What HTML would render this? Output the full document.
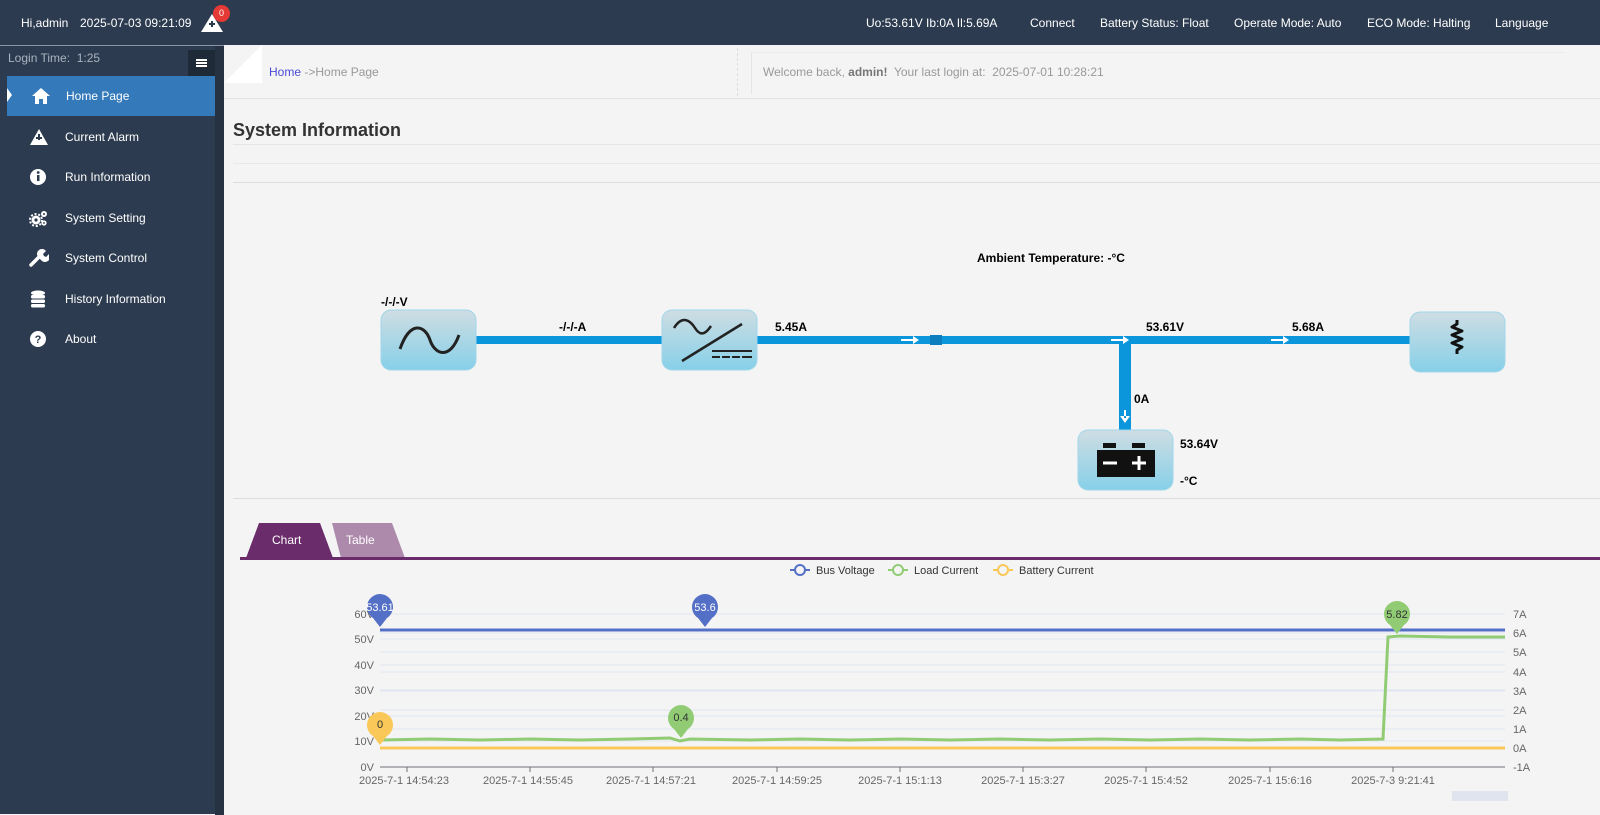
<!DOCTYPE html>
<html><head><meta charset="utf-8"><style>
*{margin:0;padding:0;box-sizing:border-box}
body{width:1600px;height:814px;overflow:hidden;background:#f4f4f4;font-family:"Liberation Sans",Arial,sans-serif;position:relative}
.top{position:absolute;left:0;top:0;width:1600px;height:45px;background:#2c3b4f;color:#fff;font-size:12px}
.top span{position:absolute;top:16px}
.side{position:absolute;left:0;top:45px;width:224px;height:769px;background:#2c3b4f;border-top:1px solid #8a96a6}
.side .strip{position:absolute;left:215px;top:0;width:9px;height:769px;background:#263242}
.menu{position:absolute;left:0;width:215px;height:40px;color:#fff;font-size:12px}
.menu .t{position:absolute;left:65px;top:13px}
.menu svg{position:absolute;left:29px;top:11px}
</style></head><body>
<div class="top">
<span style="left:21px">Hi,admin</span>
<span style="left:80px">2025-07-03 09:21:09</span>
<svg style="position:absolute;left:200px;top:13px" width="24" height="20" viewBox="0 0 24 20"><path d="M12 1 L23 19 H1 Z" fill="#fff"/><path d="M12 8v6M9 11h6" stroke="#2c3b4f" stroke-width="2"/></svg>
<div style="position:absolute;left:213px;top:5px;width:17px;height:17px;border-radius:50%;background:#e53935;font-size:9px;text-align:center;line-height:17px">0</div>
<span style="left:866px">Uo:53.61V Ib:0A Il:5.69A</span>
<span style="left:1030px">Connect</span>
<span style="left:1100px">Battery Status: Float</span>
<span style="left:1234px">Operate Mode: Auto</span>
<span style="left:1367px">ECO Mode: Halting</span>
<span style="left:1495px">Language</span>
</div>
<div class="side">
<div class="strip"></div>
<div style="position:absolute;left:8px;top:5px;color:#aab4c0;font-size:12px">Login Time:&nbsp; 1:25</div>
<div style="position:absolute;left:188px;top:4px;width:27px;height:27px;background:#1f2a38"><div style="position:absolute;left:8px;top:9px;width:11px;height:2px;background:#fff;box-shadow:0 3px #fff,0 6px #fff"></div></div>
<div class="menu" style="top:30px;left:7px;width:208px;background:#3479b9"><svg width="20" height="18" viewBox="0 0 20 18" style="left:24px"><path d="M10 1 L19 9 H16 V17 H12 V12 H8 V17 H4 V9 H1 Z" fill="#fff"/></svg><span class="t" style="left:59px">Home Page</span><div style="position:absolute;left:0;top:12px;border-left:5px solid #fff;border-top:7px solid transparent;border-bottom:7px solid transparent"></div></div>
<div class="menu" style="top:71px"><svg width="20" height="18" viewBox="0 0 20 18"><path d="M10 1 L19 17 H1 Z" fill="#fff"/><path d="M10 6v6M7 10h6" stroke="#2c3b4f" stroke-width="2"/></svg><span class="t">Current Alarm</span></div>
<div class="menu" style="top:111px"><svg width="20" height="18" viewBox="0 0 20 18"><circle cx="9" cy="9" r="8" fill="#fff"/><rect x="8" y="7" width="2.5" height="6" fill="#2c3b4f"/><circle cx="9.2" cy="4.5" r="1.4" fill="#2c3b4f"/></svg><span class="t">Run Information</span></div>
<div class="menu" style="top:152px"><svg width="20" height="18" viewBox="0 0 20 18"><circle cx="7" cy="11" r="4.5" fill="#fff"/><circle cx="7" cy="11" r="6" fill="none" stroke="#fff" stroke-width="2" stroke-dasharray="2 1.8"/><circle cx="7" cy="11" r="1.6" fill="#2c3b4f"/><circle cx="15" cy="5" r="3" fill="#fff"/><circle cx="15" cy="5" r="1" fill="#2c3b4f"/><circle cx="15" cy="14" r="2.6" fill="#fff"/><circle cx="15" cy="14" r="0.9" fill="#2c3b4f"/></svg><span class="t">System Setting</span></div>
<div class="menu" style="top:192px"><svg width="20" height="18" viewBox="0 0 20 18"><path d="M2 16 L10 8" stroke="#fff" stroke-width="3.5" stroke-linecap="round"/><path d="M9 8 a5 5 0 0 1 8 -6 l-3 3 l1 2 l2 1 l3-3 a5 5 0 0 1 -7 7z" fill="#fff"/></svg><span class="t">System Control</span></div>
<div class="menu" style="top:233px"><svg width="20" height="18" viewBox="0 0 20 18"><ellipse cx="9" cy="3" rx="7" ry="2.5" fill="#fff"/><rect x="2" y="5" width="14" height="3.5" rx="1.5" fill="#fff"/><rect x="2" y="9.5" width="14" height="3.5" rx="1.5" fill="#fff"/><rect x="2" y="14" width="14" height="3.5" rx="1.5" fill="#fff"/></svg><span class="t">History Information</span></div>
<div class="menu" style="top:273px"><svg width="20" height="18" viewBox="0 0 20 18"><circle cx="9" cy="9" r="8" fill="#fff"/><text x="9" y="13" font-size="11" font-weight="bold" text-anchor="middle" fill="#2c3b4f" font-family="Liberation Sans">?</text></svg><span class="t">About</span></div>
</div>
<svg style="position:absolute;left:224px;top:45px" width="40" height="40"><path d="M0 38 L38 0 V38 Z" fill="#fff"/></svg>
<div style="position:absolute;left:269px;top:65px;font-size:12px;color:#999"><span style="color:#4b4bd6">Home</span> -&gt;Home Page</div>
<div style="position:absolute;left:737px;top:48px;height:48px;border-left:1px dashed #ddd"></div>
<div style="position:absolute;left:751px;top:52px;width:815px;height:42px;border-left:1px solid #e4e4e4;border-top:1px solid #ececec"></div>
<div style="position:absolute;left:763px;top:65px;font-size:12px;color:#999">Welcome back, <b style="color:#777">admin!</b>&nbsp; Your last login at:&nbsp; 2025-07-01 10:28:21</div>
<div style="position:absolute;left:224px;top:98px;width:1376px;border-top:1px solid #e2e2e2"></div>
<div style="position:absolute;left:233px;top:120px;font-size:18px;font-weight:bold;color:#333">System Information</div>
<div style="position:absolute;left:233px;top:144px;width:1367px;border-top:1px solid #e4e4e4"></div>
<div style="position:absolute;left:233px;top:163px;width:1367px;border-top:1px solid #e8e8e8"></div>
<div style="position:absolute;left:233px;top:182px;width:1367px;border-top:1px solid #ddd"></div>
<div style="position:absolute;left:233px;top:498px;width:1367px;border-top:1px solid #ddd"></div>
<svg style="position:absolute;left:0;top:0" width="1600" height="814" font-family="Liberation Sans" font-weight="bold" font-size="12">
<defs><linearGradient id="g" x1="0" y1="0" x2="0" y2="1"><stop offset="0" stop-color="#cfdde3"/><stop offset="1" stop-color="#86d0e8"/></linearGradient></defs>
<rect x="476" y="336" width="188" height="8" fill="#0b96dc"/>
<rect x="756" y="336" width="656" height="8" fill="#0b96dc"/>
<rect x="1119" y="340" width="12" height="92" fill="#0b96dc"/>
<rect x="930" y="335" width="12" height="10" fill="#0b7ec0"/>
<g fill="#fff"><path d="M901 339h14v2h-14z M913 336l6 4-6 4z"/><path d="M1111 339h14v2h-14z M1123 336l6 4-6 4z"/><path d="M1271 339h14v2h-14z M1283 336l6 4-6 4z"/><path d="M1124 410h2v8h-2z M1120 416l5 7 5-7z"/></g>
<rect x="381" y="310" width="95" height="60" rx="10" fill="url(#g)" stroke="#9fd6ea"/>
<path d="M400 349 C410 320, 425 325, 430 340 S450 360, 459 335" fill="none" stroke="#222" stroke-width="3"/>
<rect x="662" y="310" width="95" height="60" rx="10" fill="url(#g)" stroke="#9fd6ea"/>
<path d="M674 328 C682 315,690 320,695 328 S705 335,711 326" fill="none" stroke="#222" stroke-width="2.5"/>
<path d="M682 361 L742 324" stroke="#222" stroke-width="2.5"/>
<path d="M712 351h40M712 357h8M722 357h8M732 357h8M742 357h10" stroke="#222" stroke-width="2"/>
<rect x="1410" y="312" width="95" height="60" rx="10" fill="url(#g)" stroke="#9fd6ea"/>
<path d="M1457 320 l0 4 l-5 3 l10 4 l-10 4 l10 4 l-10 4 l10 4 l-5 3 l0 4" fill="none" stroke="#111" stroke-width="3" stroke-linejoin="round"/>
<rect x="1078" y="430" width="95" height="60" rx="10" fill="url(#g)" stroke="#9fd6ea"/>
<rect x="1103" y="443" width="13" height="5" fill="#111"/><rect x="1132" y="443" width="13" height="5" fill="#111"/>
<rect x="1097" y="450" width="58" height="27" fill="#111"/>
<path d="M1103 463h14M1132 463h14M1139 456v14" stroke="#fff" stroke-width="3"/>
<text x="381" y="306">-/-/-V</text><text x="559" y="331">-/-/-A</text><text x="775" y="331">5.45A</text>
<text x="977" y="262">Ambient Temperature: -°C</text>
<text x="1146" y="331">53.61V</text><text x="1292" y="331">5.68A</text>
<text x="1134" y="403">0A</text><text x="1180" y="448">53.64V</text><text x="1180" y="485">-°C</text>
</svg>
<svg style="position:absolute;left:0;top:0" width="1600" height="814" font-family="Liberation Sans" font-size="12">
<path d="M259 523 H320 L333 558 H246 Z" fill="#6a2c6b"/>
<path d="M332 523 H392 L405 558 H341 Z" fill="#ad8aab"/>
<rect x="240" y="557" width="1360" height="3" fill="#6a2c6b"/>
<text x="272" y="544" fill="#fff">Chart</text><text x="346" y="544" fill="#fff">Table</text>
</svg>
<svg style="position:absolute;left:0;top:0" width="1600" height="814" font-family="Liberation Sans,DejaVu Sans" font-size="11" fill="#666">
<g font-size="11" fill="#333">
<path d="M790 570h20" stroke="#5470c6" stroke-width="2"/><circle cx="800" cy="570" r="5" fill="#f4f4f4" stroke="#5470c6" stroke-width="2"/><text x="816" y="574">Bus Voltage</text>
<path d="M888 570h20" stroke="#91cc75" stroke-width="2"/><circle cx="898" cy="570" r="5" fill="#f4f4f4" stroke="#91cc75" stroke-width="2"/><text x="914" y="574">Load Current</text>
<path d="M993 570h20" stroke="#fac858" stroke-width="2"/><circle cx="1003" cy="570" r="5" fill="#f4f4f4" stroke="#fac858" stroke-width="2"/><text x="1019" y="574">Battery Current</text>
</g>
<g stroke="#e0e6f1"><path d="M380 614H1505M380 633H1505M380 652H1505M380 672H1505M380 691H1505M380 710H1505M380 729H1505M380 748H1505M380 639H1505M380 665H1505M380 690H1505M380 716H1505M380 741H1505"/></g>
<path d="M380 767H1505" stroke="#6e7079"/>
<g stroke="#6e7079"><path d="M407 767v5M530 767v5M653 767v5M777 767v5M900 767v5M1023 767v5M1146 767v5M1270 767v5M1393 767v5"/></g>
<g text-anchor="end"><text x="374" y="618">60V</text><text x="374" y="643">50V</text><text x="374" y="669">40V</text><text x="374" y="694">30V</text><text x="374" y="720">20V</text><text x="374" y="745">10V</text><text x="374" y="771">0V</text></g>
<g><text x="1513" y="618">7A</text><text x="1513" y="637">6A</text><text x="1513" y="656">5A</text><text x="1513" y="676">4A</text><text x="1513" y="695">3A</text><text x="1513" y="714">2A</text><text x="1513" y="733">1A</text><text x="1513" y="752">0A</text><text x="1513" y="771">-1A</text></g>
<g text-anchor="middle"><text x="404" y="784">2025-7-1 14:54:23</text><text x="528" y="784">2025-7-1 14:55:45</text><text x="651" y="784">2025-7-1 14:57:21</text><text x="777" y="784">2025-7-1 14:59:25</text><text x="900" y="784">2025-7-1 15:1:13</text><text x="1023" y="784">2025-7-1 15:3:27</text><text x="1146" y="784">2025-7-1 15:4:52</text><text x="1270" y="784">2025-7-1 15:6:16</text><text x="1393" y="784">2025-7-3 9:21:41</text></g>
<path d="M380 748H1505" stroke="#fac858" stroke-width="3"/>
<path d="M380 630H1505" stroke="#5470c6" stroke-width="3"/>
<path d="M380 740 L430 739 L480 740 L530 739 L580 740 L630 739 L670 738 L680 741 L690 739 L750 740 L800 739 L850 740 L900 739 L950 740 L1000 739 L1050 740 L1100 739 L1150 740 L1200 739 L1250 740 L1300 739 L1340 740 L1383 739 L1388 637 L1400 636 L1450 637 L1505 637" fill="none" stroke="#91cc75" stroke-width="3"/>
<g fill="#fff" font-size="11" text-anchor="middle">
<path d="M380 627 l-7 -9 a13 13 0 1 1 14 0z" fill="#5470c6"/><text x="380" y="611">53.61</text>
<path d="M705 627 l-7 -9 a13 13 0 1 1 14 0z" fill="#5470c6"/><text x="705" y="611">53.6</text>
<path d="M1397 634 l-7 -9 a13 13 0 1 1 14 0z" fill="#91cc75"/><text x="1397" y="618" fill="#333">5.82</text>
<path d="M681 738 l-7 -9 a13 13 0 1 1 14 0z" fill="#91cc75"/><text x="681" y="721" fill="#333">0.4</text>
<path d="M380 745 l-7 -9 a13 13 0 1 1 14 0z" fill="#fac858"/><text x="380" y="728" fill="#333">0</text>
</g>
<rect x="1452" y="791" width="56" height="10" fill="#dfe4ef"/>
</svg>
</body></html>
